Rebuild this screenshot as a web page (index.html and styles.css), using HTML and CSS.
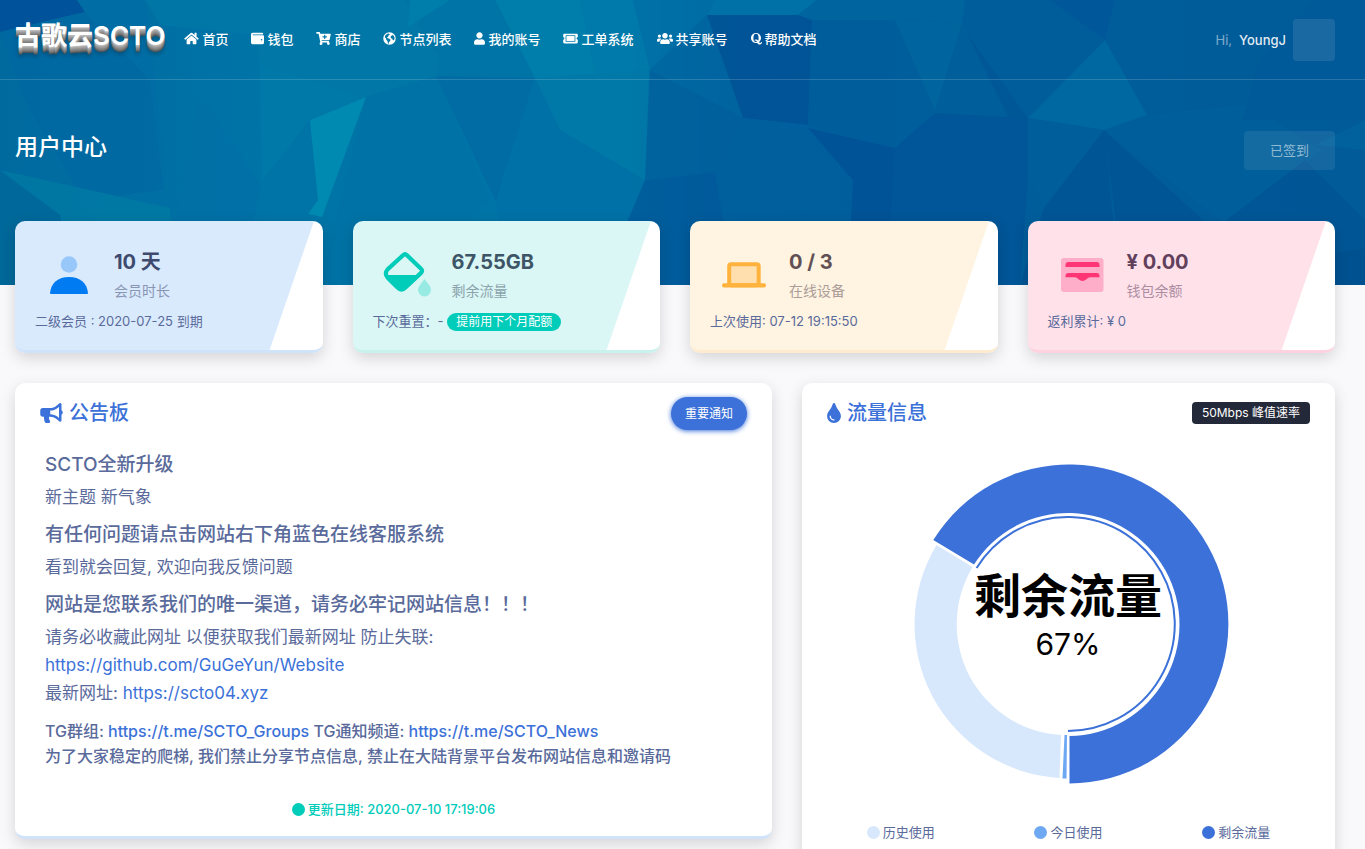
FILE: index.html
```html
<!DOCTYPE html>
<html lang="zh-CN">
<head>
<meta charset="utf-8">
<meta name="viewport" content="width=device-width, initial-scale=1">
<title>用户中心</title>
<link rel="stylesheet" href="styles.css">
</head>
<body>
<div class="hero">
  <svg class="hero-art" viewBox="0 0 1365 285" preserveAspectRatio="none" aria-hidden="true">
    <defs>
      <linearGradient id="sea" x1="0" x2="1" y1="0" y2="0">
        <stop offset="0" stop-color="#006a9f"/><stop offset=".2" stop-color="#0074a7"/>
        <stop offset=".46" stop-color="#0074a6"/><stop offset=".54" stop-color="#005f9d"/>
        <stop offset="1" stop-color="#005b98"/>
      </linearGradient>
    </defs>
    <path fill="url(#sea)" d="M0 0h1365v285H0z"/>
    <path fill="#00539a" d="M0 0h77l8 12L0 32z"/>
    <path fill="#008ab1" d="M366 97l-56 23 8 80-10 14 14 3z"/>
    <g opacity=".72">
    <path fill="#0068a2" d="M0 32l85-20 65 68 14 110-80 10L30 110z"/>
    <path fill="#006da5" d="M85 12L77 0h68l10 80 11 110-16-110z"/>
    <path fill="#0079a8" d="M145 0h260l35 60-4 16-70 21-106-32-5-30-95-10z"/>
    <path fill="#0082ad" d="M410 0h40l-42 27zM495 0h85l16 76-61 2z"/>
    <path fill="#007dac" d="M580 0h53l17 70-54 6z"/>
    <path fill="#007bab" d="M260 65l106 32-56 23-48 60z"/>
    <path fill="#0070a6" d="M200 95l60 90-18 100h-80z"/>
    <path fill="#006da2" d="M366 97l70-21 54 124-90 85h-80z" opacity=".3"/>
    <path fill="#0069a2" d="M436 76l99 2-33 102-6 22z"/>
    <path fill="#007aa9" d="M535 78l114-8-4 110-85-50z"/>
    <path fill="#0071a6" d="M496 202l39-124 25 52 85 50-25 65-60 40h-50z"/>
    <path fill="#007ca5" d="M0 170l170 38 3 77H70L60 215z"/>
    <path fill="#006899" d="M0 172l60 43 10 70H0z"/>
    <path fill="#0071a8" d="M633 0h82l-8 15-57 55z"/>
    <path fill="#0078aa" d="M715 0h102l-19 15h-91z"/>
    <path fill="#0066a1" d="M707 15l36 103-93-48z"/>
    <path fill="#005195" d="M707 15h91l14 5-4 105-65-7z"/>
    <path fill="#005f9c" d="M650 70l93 48-28 54-70 8z"/>
    <path fill="#00579a" d="M645 180l70-8 20 113H600z"/>
    <path fill="#0067a1" d="M817 0h148l-3 23-62-3h-88l-14-5z"/>
    <path fill="#005d9b" d="M812 20h83v128l-87-23z"/>
    <path fill="#00609d" d="M743 118l65 7-22 35-3 125h-48l-20-113z"/>
    <path fill="#004f95" d="M808 128l87 20-7 137h-40l5-105z"/>
    <path fill="#00689f" d="M895 20l67 3-27 87z"/>
    <path fill="#00609b" d="M962 23l46 95-73-5z"/>
    <path fill="#005696" d="M966 32l62 86-20-1z"/>
    <path fill="#005497" d="M935 113l93 5v62l-43-25zM895 148l40-35 93 67-8 105H888z"/>
    <path fill="#006da3" d="M1105 40l42 75-43 15-76-12z"/>
    <path fill="#005d9b" d="M965 0h85l55 40-77 78-62-86z"/>
    <path fill="#00569a" d="M1050 0h65l-10 40z"/>
    <path fill="#005f9c" d="M1028 118l76 12-60 78-16-30z"/>
    <path fill="#005394" d="M1104 130l110 100v55h-90zM1104 130l-60 78-24 77h100z"/>
    <path fill="#00619c" d="M1104 130l43-15 100-10 75 45-95 75z"/>
    <path fill="#005998" d="M1260 60l-18 60h123V0h-50z"/>
    <path fill="#00649f" d="M1315 145l50-25v30z"/>
    <path fill="#005595" d="M1220 225l85-65 60 60v65h-160z"/>
    <path fill="#004e8e" d="M1260 265l105-17v37h-110z"/>
    </g>
  </svg>

  <header class="topbar">
    <a class="logo" href="#">古歌云SCTO</a>
    <nav class="nav" aria-label="主导航">
      <a href="#"><svg width="15" height="13" viewBox="0 0 576 512"><path d="M280.37 148.26L96 300.11V464a16 16 0 0 0 16 16l112.06-.29a16 16 0 0 0 15.92-16V368a16 16 0 0 1 16-16h64a16 16 0 0 1 16 16v95.64a16 16 0 0 0 16 16.05L464 480a16 16 0 0 0 16-16V300L295.67 148.26a12.19 12.19 0 0 0-15.3 0zM571.6 251.47L488 182.56V44.05a12 12 0 0 0-12-12h-56a12 12 0 0 0-12 12v72.61L318.47 43a48 48 0 0 0-61 0L4.34 251.47a12 12 0 0 0-1.6 16.9l25.5 31A12 12 0 0 0 45.15 301l235.22-193.74a12.19 12.19 0 0 1 15.3 0L530.9 301a12 12 0 0 0 16.9-1.6l25.5-31a12 12 0 0 0-1.7-16.93z"/></svg>首页</a>
      <a href="#"><svg width="13" height="13" viewBox="0 0 512 512"><path d="M461.2 128H80c-8.84 0-16-7.16-16-16s7.16-16 16-16h384c8.84 0 16-7.16 16-16 0-26.51-21.49-48-48-48H64C28.65 32 0 60.65 0 96v320c0 35.35 28.65 64 64 64h397.2c28.02 0 50.8-21.53 50.8-48V176c0-26.47-22.78-48-50.8-48zM416 336c-17.67 0-32-14.33-32-32s14.33-32 32-32 32 14.33 32 32-14.33 32-32 32z"/></svg>钱包</a>
      <a href="#"><svg width="15" height="13" viewBox="0 0 576 512"><path d="M504.717 320H211.572l6.545 32h268.418c15.401 0 26.816 14.301 23.403 29.319l-5.517 24.276C523.112 414.668 536 433.828 536 456c0 31.202-25.519 56.444-56.824 55.994-29.823-.429-54.35-24.631-55.155-54.447-.44-16.287 6.085-31.049 16.803-41.548H231.176C241.553 426.165 248 440.326 248 456c0 31.813-26.528 57.431-58.67 55.938-28.54-1.325-51.751-24.385-53.251-52.917-1.158-22.034 10.436-41.455 28.051-51.586L93.883 64H24C10.745 64 0 53.255 0 40V24C0 10.745 10.745 0 24 0h102.529c11.401 0 21.228 8.021 23.513 19.19L159.208 64H551.99c15.401 0 26.816 14.301 23.403 29.319l-47.273 208C525.637 312.246 515.923 320 504.717 320zM408 168h-48v-40c0-8.837-7.163-16-16-16h-16c-8.837 0-16 7.163-16 16v40h-48c-8.837 0-16 7.163-16 16v16c0 8.837 7.163 16 16 16h48v40c0 8.837 7.163 16 16 16h16c8.837 0 16-7.163 16-16v-40h48c8.837 0 16-7.163 16-16v-16c0-8.837-7.163-16-16-16z"/></svg>商店</a>
      <a href="#"><svg width="13" height="13" viewBox="0 0 26 26"><path fill-rule="evenodd" d="M13 .5a12.5 12.5 0 1 0 0 25 12.5 12.5 0 0 0 0-25zM4 8l2-2.5 3-2 3-.5 1.500 2-2.500 2-1 2.500-2 1.500 1 1.500 3 .5 3 2.500-1 3-2 1.500-.5 3.500-1.500-.5-1-5-2.500-2.500-.5-3-2-1.500zM18 5l3 2 2 3.500v4l-1.500 2-2-.5-1-2.500-2.500-1-1-2.500 1.500-2.500 2.500-.5z"/></svg>节点列表</a>
      <a href="#"><svg width="11" height="13" viewBox="0 0 448 512"><path d="M224 256c70.7 0 128-57.3 128-128S294.7 0 224 0 96 57.3 96 128s57.3 128 128 128zm89.6 32h-16.7c-22.2 10.2-46.9 16-72.9 16s-50.6-5.8-72.9-16h-16.7C60.2 288 0 348.2 0 422.400V464c0 26.500 21.500 48 48 48h352c26.500 0 48-21.500 48-48v-41.600c0-74.200-60.200-134.400-134.400-134.400z"/></svg>我的账号</a>
      <a href="#"><svg width="15" height="13" viewBox="0 0 576 512"><path d="M128 160h320v192H128V160zm400 96c0 26.51 21.49 48 48 48v96c0 26.51-21.49 48-48 48H48c-26.51 0-48-21.49-48-48v-96c26.51 0 48-21.49 48-48s-21.49-48-48-48v-96c0-26.51 21.49-48 48-48h480c26.51 0 48 21.49 48 48v96c-26.51 0-48 21.49-48 48zm-48-104c0-13.255-10.745-24-24-24H120c-13.255 0-24 10.745-24 24v208c0 13.255 10.745 24 24 24h336c13.255 0 24-10.745 24-24V152z"/></svg>工单系统</a>
      <a href="#"><svg width="16" height="13" viewBox="0 0 640 512"><path d="M96 224c35.300 0 64-28.700 64-64s-28.700-64-64-64-64 28.700-64 64 28.700 64 64 64zm448 0c35.300 0 64-28.700 64-64s-28.700-64-64-64-64 28.700-64 64 28.700 64 64 64zm32 32h-64c-17.600 0-33.500 7.100-45.100 18.600 40.300 22.100 68.900 62 75.100 109.400h66c17.700 0 32-14.300 32-32v-32c0-35.300-28.700-64-64-64zm-256 0c61.900 0 112-50.100 112-112S381.900 32 320 32 208 82.100 208 144s50.100 112 112 112zm76.800 32h-8.300c-20.800 10-43.900 16-68.500 16s-47.600-6-68.500-16h-8.300C179.600 288 128 339.600 128 403.200V432c0 26.500 21.500 48 48 48h288c26.500 0 48-21.500 48-48v-28.800c0-63.600-51.600-115.200-115.200-115.200zm-223.700-13.400C161.500 263.100 145.600 256 128 256H64c-35.300 0-64 28.700-64 64v32c0 17.700 14.300 32 32 32h65.900c6.300-47.400 34.900-87.300 75.200-109.400z"/></svg>共享账号</a>
      <a href="#"><svg width="11" height="13" viewBox="0 0 22 26"><path fill-rule="evenodd" d="M10 2C4.500 2 0 6.500 0 12.200s4.500 10 10 10c1 0 1.700-.1 2.500-.3 1 1.700 2.300 3.100 4.700 3.100 3.600 0 4.800-2.600 4.600-5h-1.600c-.1 1-.6 1.900-1.800 1.900-1 0-1.800-.6-2.500-1.700 2.500-1.800 4.100-4.700 4.100-8C20 6.500 15.500 2 10 2zm0 1.300c3.900 0 5.200 3.400 5.200 8.900 0 2.200-.2 4-.8 5.300-1-1.500-2.400-2.600-4.600-2.600-1.400 0-2.500.4-3.300 1.100l.6 1.200c.4-.2.9-.3 1.400-.3 1.800 0 2.700 1.500 3.400 3-.6.200-1.200.3-1.900.3-3.800 0-5.200-2.800-5.200-8s1.400-8.900 5.200-8.900z"/></svg>帮助文档</a>
    </nav>
    <div class="account">
      <span class="hi">Hi,</span><span class="user">YoungJ</span>
      <button class="avatar" type="button" aria-label="账户菜单"></button>
    </div>
  </header>

  <div class="hero-row">
    <h1>用户中心</h1>
    <button class="checkin" type="button" disabled>已签到</button>
  </div>
</div>

<main class="content">
  <section class="stats">
    <article class="stat blue">
      <div class="stat-main">
        <svg width="60" height="60" viewBox="0 0 60 60"><circle cx="30" cy="19.500" r="8.300" fill="#98c8fa"/><path fill="#007bf2" d="M11 48c1-10 8-16 19-16s18 6 19 16q0 1-1 1H12q-1 0-1-1z"/></svg>
        <div><strong>10 天</strong><span>会员时长</span></div>
      </div>
      <p>二级会员 : 2020-07-25 到期</p>
    </article>
    <article class="stat teal">
      <div class="stat-main">
        <svg width="60" height="60" viewBox="0 0 60 60"><path d="M9.500 30h35L29 44q-4.500 3-8.500 0L10.500 34z" fill="#00ccba"/><path d="M26 10.300q2-2 4 0l14 13.400q2.200 2 0 4.200L28.500 42.500q-4 4-8 0L10.500 32.500q-3.300-4 0-8z" fill="none" stroke="#00ccba" stroke-width="4.200"/><path d="M47.500 34c3 4 6.500 7.500 6.500 11a6.500 6.500 0 0 1-13 0c0-3.500 3.500-7 6.500-11z" fill="#97ebe3"/></svg>
        <div><strong>67.55GB</strong><span>剩余流量</span></div>
      </div>
      <p>下次重置：- <a class="pill" href="#">提前用下个月配额</a></p>
    </article>
    <article class="stat amber">
      <div class="stat-main">
        <svg width="60" height="60" viewBox="0 0 60 60"><rect x="15.200" y="19.200" width="29.500" height="21" rx="2" fill="#ffdfae" stroke="#ffb23c" stroke-width="4"/><rect x="8" y="38.300" width="44" height="4.200" rx="2" fill="#ffb23c"/></svg>
        <div><strong>0 / 3</strong><span>在线设备</span></div>
      </div>
      <p>上次使用: 07-12 19:15:50</p>
    </article>
    <article class="stat pink">
      <div class="stat-main">
        <svg width="60" height="60" viewBox="0 0 60 60"><rect x="9" y="13" width="42.500" height="34" rx="3" fill="#ffaec9"/><path fill="#ff3576" d="M13.500 22v-2q0-3 3-3h28q3 0 3 3v2zM13.500 32.200v-1q0-3.200 3-3.200h28q3 0 3 3.200v1h-9q-2.500 0-4 2-4 3.500-8 0-1.500-2-4-2z"/></svg>
        <div><strong>¥ 0.00</strong><span>钱包余额</span></div>
      </div>
      <p>返利累计: ¥ 0</p>
    </article>
  </section>

  <section class="panels">
    <article class="panel notice">
      <div class="panel-head">
        <h2><svg width="23" height="20" viewBox="0 0 576 512"><path d="M576 240c0-23.630-12.950-44.040-32-55.120V32.010C544 23.260 537.020 0 512 0c-7.120 0-14.190 2.380-19.980 7.020l-85.030 68.030C364.280 109.190 310.660 128 256 128H64c-35.350 0-64 28.650-64 64v96c0 35.350 28.650 64 64 64h33.700c-1.390 10.480-2.180 21.140-2.180 32 0 39.770 9.260 77.350 25.560 110.940 5.190 10.690 16.520 17.060 28.400 17.060h74.280c26.050 0 41.690-29.840 25.900-50.560-16.400-21.520-26.150-48.360-26.150-77.440 0-11.110 1.620-21.790 4.410-32H256c54.660 0 108.280 18.810 150.980 52.950l85.030 68.030a32.023 32.023 0 0 0 19.980 7.020c24.920 0 32-22.780 32-32V295.130C563.050 284.040 576 263.630 576 240zm-96 141.420l-33.050-26.440C392.950 311.780 325.120 288 256 288v-96c69.120 0 136.950-23.780 190.950-66.980L480 98.580v282.840z"/></svg>公告板</h2>
        <button class="important" type="button">重要通知</button>
      </div>
      <div class="notice-body">
        <h3>SCTO全新升级</h3>
        <p>新主题 新气象</p>
        <h3>有任何问题请点击网站右下角蓝色在线客服系统</h3>
        <p>看到就会回复, 欢迎向我反馈问题</p>
        <h3>网站是您联系我们的唯一渠道，请务必牢记网站信息！！！</h3>
        <p>请务必收藏此网址 以便获取我们最新网址 防止失联:<br><a href="#">https://github.com/GuGeYun/Website</a><br>最新网址: <a href="#">https://scto04.xyz</a></p>
        <div class="groups">TG群组: <a href="#">https://t.me/SCTO_Groups</a> TG通知频道: <a href="#">https://t.me/SCTO_News</a><br>为了大家稳定的爬梯, 我们禁止分享节点信息, 禁止在大陆背景平台发布网站信息和邀请码</div>
      </div>
      <div class="updated"><i class="dot"></i>更新日期: 2020-07-10 17:19:06</div>
    </article>

    <article class="panel traffic">
      <div class="panel-head">
        <h2><svg width="14" height="20" viewBox="0 0 352 512"><path d="M205.220 22.090c-7.940-28.780-49.440-30.120-58.440 0C100.010 179.850 0 222.720 0 333.910 0 432.350 78.720 512 176 512s176-79.650 176-178.090c0-111.750-99.790-153.340-146.780-311.820zM176 448c-61.750 0-112-50.250-112-112 0-8.840 7.160-16 16-16s16 7.160 16 16c0 44.110 35.890 80 80 80 8.840 0 16 7.160 16 16s-7.160 16-16 16z"/></svg>流量信息</h2>
        <span class="speed">50Mbps 峰值速率</span>
      </div>
      <svg class="donut" width="320" height="320" viewBox="0 0 320 320" role="img" aria-label="剩余流量 67%">
        <path fill="#3b71d8" d="M161.500 319.500A159.500 159.500 0 1 0 25.300 76L66 100.500A111.500 111.500 0 1 1 161.500 272z"/>
        <path fill="none" stroke="#3b71d8" stroke-width="2" d="M160 267A107 107 0 1 0 68.600 104"/>
        <path fill="#d8e8fc" d="M28.500 81A154 154 0 0 0 151.500 314L153 271A111 111 0 0 1 64.600 103z"/>
        <path fill="#6ea8f2" d="M154.500 314.500L156.500 271h2.500l-.5 43.500z"/>
        <text class="donut-title" x="160" y="149">剩余流量</text>
        <text class="donut-value" x="160" y="191">67%</text>
      </svg>
      <ul class="legend">
        <li><i class="dot light"></i>历史使用</li>
        <li><i class="dot mid"></i>今日使用</li>
        <li><i class="dot deep"></i>剩余流量</li>
      </ul>
    </article>
  </section>
</main>
</body>
</html>
```

FILE: styles.css
```css
* { box-sizing: border-box; }
body {
  margin: 0;
  background: #f9f9fc;
  color: #596a9b;
  font: 400 13px/20px Inter, "Noto Sans CJK SC", sans-serif;
}
a { color: #3b71d8; text-decoration: none; }
h1, h2, h3, p, ul { margin: 0; padding: 0; }
button { font-family: inherit; border: 0; cursor: pointer; }

.hero { position: relative; padding-bottom: 115px; }
.hero-art { position: absolute; inset: 0; width: 100%; height: 100%; z-index: -1; }

.topbar {
  display: flex;
  align-items: center;
  height: 80px;
  padding: 0 30px 0 15px;
  border-bottom: 1px solid rgba(255, 255, 255, .16);
}
.logo {
  margin-right: 19px;
  color: #fff;
  font-size: 26px;
  font-weight: 600;
  line-height: 40px;
  padding-bottom: 8px;
  text-shadow: 0 1px 0 #bbb, 0 2px 0 #aaa, 0 3px 0 #999, 0 4px 0 #8c8c8c,
    0 5px 0 #7c7c7c, 0 6px 0 #6c6c6c, 0 7px 1px #555, 0 9px 4px rgba(0, 0, 0, .3);
}
.nav { display: flex; gap: 23px; padding-bottom: 2px; }
.nav a { display: flex; align-items: center; gap: 3px; color: #fff; font-weight: 500; white-space: nowrap; }
.nav svg { fill: #fff; flex: none; }
.account { display: flex; align-items: center; gap: 7px; margin-left: auto; }
.hi { color: rgba(255, 255, 255, .5); }
.user { color: rgba(255, 255, 255, .9); font-weight: 500; }
.avatar { width: 42px; height: 42px; border-radius: 4px; background: rgba(255, 255, 255, .1); }

.hero-row {
  display: flex;
  align-items: center;
  justify-content: space-between;
  padding: 51px 30px 0 15px;
}
h1 { color: #fff; font-size: 23px; font-weight: 500; line-height: 32px; padding-bottom: 7px; }
.checkin {
  height: 39px;
  padding: 0 26px 2px;
  border-radius: 4px;
  background: rgba(255, 255, 255, .08);
  color: rgba(255, 255, 255, .55);
  font-size: 13px;
}

.content { position: relative; margin-top: -64px; padding: 0 30px 30px 15px; }
.stats { display: grid; grid-template-columns: repeat(4, 1fr); gap: 30px; }
.stat, .panel { border-radius: 10px; box-shadow: 0 5px 15px rgba(0, 0, 0, .15); }
.stat {
  padding: 24px 20px 19px;
  border-bottom: 3px solid var(--edge);
  background: linear-gradient(109deg, var(--tint) calc(100% - 51px), #fff calc(100% - 50px));
}
.stat-main { display: flex; gap: 15px; padding-left: 4px; }
.stat-main svg { margin-bottom: 6px; }
.stat-main strong, .stat-main span { display: block; }
.stat-main strong { color: var(--ink); font-size: 20px; font-weight: 700; line-height: 34px; }
.stat-main span { color: var(--soft); font-size: 14px; line-height: 24px; }
.blue { --tint: #daeafd; --edge: #cfe3fb; --ink: #3e4a6e; --soft: #8895b3; }
.teal { --tint: #daf7f5; --edge: #c9f2ee; --ink: #3e5568; --soft: #8aa3ac; }
.amber { --tint: #fff3e1; --edge: #ffecd0; --ink: #615053; --soft: #ab9d98; }
.pink { --tint: #ffe1ea; --edge: #ffd2df; --ink: #61405c; --soft: #ab8da1; }
.pill { display: inline-block; padding: 0 9px; border-radius: 9px; background: #00ccba; color: #fff; font-size: 12px; line-height: 18px; }

.panels { display: grid; grid-template-columns: 71fr 50fr; gap: 30px; margin-top: 30px; align-items: start; }
.panel { background: #fff; border-bottom: 3px solid #cfe3fb; }
.panel-head { display: flex; align-items: center; justify-content: space-between; height: 60px; padding: 0 25px; }
h2 { display: flex; align-items: center; gap: 6px; color: #3b71d8; font-size: 20px; font-weight: 500; line-height: 28px; }
h2 svg { fill: #3b71d8; }
.important {
  height: 33px;
  padding: 0 14px 2px;
  border-radius: 17px;
  background: #3b71d8;
  color: #fff;
  font-size: 12px;
  box-shadow: 0 1px 5px #3b71d8;
}
.speed { padding: 0 10px; border-radius: 4px; background: #242939; color: #fff; font-size: 12px; line-height: 22px; }
.notice-body { padding: 10px 30px 0; }
.notice-body h3 { margin-bottom: 6px; font-size: 19px; font-weight: 500; line-height: 24px; }
.notice-body p { margin-bottom: 12px; font-size: 17px; font-weight: 400; line-height: 28px; }
.groups { font-size: 16px; font-weight: 500; line-height: 25px; }
.updated { display: flex; align-items: center; justify-content: center; gap: 3px; padding: 30px 0 17px; color: #00ccba; font-weight: 500; }
.dot { width: 13px; height: 13px; border-radius: 50%; background: #00ccba; }
.donut { display: block; margin: 21px auto 38px; overflow: visible; }
.donut text { text-anchor: middle; fill: #000; }
.donut-title { font-size: 47px; font-weight: 700; }
.donut-value { font-size: 30px; }
.legend { display: grid; grid-template-columns: repeat(3, 1fr); padding: 0 15px 25px; list-style: none; }
.legend li { display: flex; align-items: center; justify-content: center; gap: 3px; }
.light { background: #d8e8fc; }
.mid { background: #6ea8f2; }
.deep { background: #3b71d8; }
```
